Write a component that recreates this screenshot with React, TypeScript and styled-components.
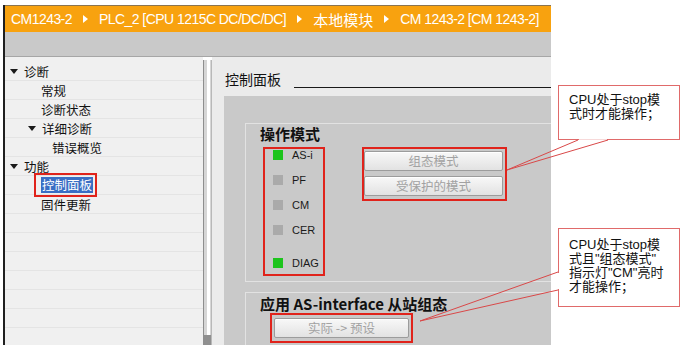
import React from "react";
import styled, { createGlobalStyle } from "styled-components";

const GlobalStyle = createGlobalStyle`
  html, body {
    margin: 0;
    padding: 0;
    background: #ffffff;
  }
  body {
    font-family: "Liberation Sans", "Noto Sans CJK SC", sans-serif;
  }
`;

const crumbs = [
  { text: "CM1243-2" },
  { text: "PLC_2 [CPU 1215C DC/DC/DC]" },
  { text: "本地模块", cjk: true },
  { text: "CM 1243-2 [CM 1243-2]" },
];

const treeRows = [
  { label: "诊断", pad: 5, arrow: true },
  { label: "常规", pad: 36 },
  { label: "诊断状态", pad: 36 },
  { label: "详细诊断", pad: 23, arrow: true },
  { label: "错误概览", pad: 47 },
  { label: "功能", pad: 5, arrow: true },
  { label: "控制面板", pad: 36, selected: true },
  { label: "固件更新", pad: 36 },
  { label: "" }, { label: "" }, { label: "" }, { label: "" },
  { label: "" }, { label: "" }, { label: "" }, { label: "" },
];

const leds = [
  { name: "AS-i", on: true },
  { name: "PF", on: false },
  { name: "CM", on: false },
  { name: "CER", on: false },
  { name: "DIAG", on: true, apart: true },
];

const App = () => {
  return (
    <Page>
      <GlobalStyle />
      <Window>
        <Breadcrumb>
          {crumbs.map((c, i) => (
            <React.Fragment key={c.text}>
              {i > 0 && <CrumbArrow />}
              <Crumb $cjk={!!c.cjk}>{c.text}</Crumb>
            </React.Fragment>
          ))}
        </Breadcrumb>
        <Toolbar />
        <Main>
          <Tree>
            {treeRows.map((r, i) => (
              <TreeRow key={i} $pad={r.pad || 0}>
                {r.arrow && <Toggle><DownArrow /></Toggle>}
                {r.selected ? <Selected>{r.label}</Selected> : r.label}
              </TreeRow>
            ))}
          </Tree>
          <Track>
            <Thumb />
          </Track>
          <Content>
            <Header>
              <HeaderTitle>控制面板</HeaderTitle>
              <HeaderRule />
            </Header>
            <Panel>
              <Group>
                <GroupTitle>操作模式</GroupTitle>
                <ModeBody>
                  <LedBox>
                    {leds.map((l) => (
                      <LedRow key={l.name} $apart={!!l.apart}>
                        <Led $on={l.on} />
                        {l.name}
                      </LedRow>
                    ))}
                  </LedBox>
                  <ButtonBox>
                    <PanelButton>组态模式</PanelButton>
                    <PanelButton>受保护的模式</PanelButton>
                  </ButtonBox>
                </ModeBody>
              </Group>
              <Group $second>
                <GroupTitle $tight>应用 AS-interface 从站组态</GroupTitle>
                <SlaveBox>
                  <PanelButton>实际 -&gt; 预设</PanelButton>
                </SlaveBox>
              </Group>
            </Panel>
          </Content>
        </Main>
      </Window>

      <Callout $top={85} $height={55} $padTop={7}>
        CPU处于stop模<br />式时才能操作；
      </Callout>
      <Callout $top={228} $height={79} $padTop={9}>
        CPU处于stop模<br />式且"组态模式"<br />指示灯"CM"亮时<br />才能操作；
      </Callout>

      <Tails width="685" height="345" viewBox="0 0 685 345">
        <line x1="579" y1="140" x2="607" y2="140" stroke="#ffffff" strokeWidth="1.5" />
        <polyline points="578,140 507,170 608,140" fill="none" stroke="#d94848" strokeWidth="1" />
        <line x1="558.5" y1="273" x2="558.5" y2="289" stroke="#ffffff" strokeWidth="1.5" />
        <polyline points="558,272 420,321 558,290" fill="none" stroke="#d94848" strokeWidth="1" />
      </Tails>
    </Page>
  );
};

export default App;

const Page = styled.div`
  position: relative;
  width: 685px;
  height: 345px;
  overflow: hidden;
  padding: 5px 0 0 3px;
  box-sizing: border-box;
`;

const Window = styled.div`
  width: 548px;
  height: 340px;
  box-sizing: border-box;
  border-left: 2px solid #1f1f1f;
  display: flex;
  flex-direction: column;
  overflow: hidden;
`;

const Breadcrumb = styled.div`
  height: 27px;
  box-sizing: border-box;
  border-top: 1px solid #8a7450;
  background: #f8a20f;
  display: flex;
  align-items: center;
  gap: 11px;
  padding-left: 6px;
  overflow: hidden;
  white-space: nowrap;
  color: #ffffff;
`;

const Crumb = styled.span<{ $cjk: boolean }>`
  font-size: ${(p) => (p.$cjk ? "15px" : "14px")};
  letter-spacing: ${(p) => (p.$cjk ? "0" : "-0.55px")};
`;

const CrumbArrow = styled.i`
  flex: none;
  width: 0;
  height: 0;
  border-top: 4px solid transparent;
  border-bottom: 4px solid transparent;
  border-left: 5px solid #ffffff;
`;

const Toolbar = styled.div`
  height: 25px;
  box-sizing: border-box;
  background: #c9c9c9;
  border-bottom: 1px solid #a6a6a6;
`;

const Main = styled.div`
  flex: 1;
  min-height: 0;
  display: flex;
`;

const Tree = styled.div`
  width: 198px;
  background: #f0f0f0;
  padding-top: 5px;
  overflow: hidden;
`;

const TreeRow = styled.div<{ $pad: number }>`
  height: 18px;
  border-bottom: 1px solid #e4e4e4;
  display: flex;
  align-items: center;
  padding-left: ${(p) => p.$pad}px;
  font-family: "Noto Sans CJK SC", sans-serif;
  font-size: 12.5px;
  color: #111111;
`;

const Toggle = styled.span`
  width: 14px;
  display: flex;
  align-items: center;
`;

const DownArrow = styled.i`
  width: 0;
  height: 0;
  border-left: 4px solid transparent;
  border-right: 4px solid transparent;
  border-top: 5px solid #1a1a1a;
`;

const Selected = styled.span`
  position: relative;
  background: #3a6ec4;
  color: #ffffff;
  padding: 0 1px;
  line-height: 16px;

  &::after {
    content: "";
    position: absolute;
    left: -7px;
    right: -4px;
    top: -4px;
    bottom: -4px;
    border: 2px solid #e0231b;
  }
`;

const Track = styled.div`
  width: 9px;
  box-sizing: border-box;
  margin-top: 3px;
  border-left: 1px solid #8e8e8e;
  border-right: 1px solid #b8b8b8;
  background: linear-gradient(to right, #d6d6d6 0 3px, #ffffff 3px 6px, #d6d6d6 6px);
  display: flex;
  flex-direction: column;
`;

const Thumb = styled.div`
  margin-top: auto;
  height: 10px;
  background: #8f8f8f;
`;

const Content = styled.div`
  flex: 1;
  min-width: 0;
  background: #ebebeb;
  padding: 14px 0 0 13px;
  display: flex;
  flex-direction: column;
`;

const Header = styled.div`
  height: 17px;
  display: flex;
  align-items: flex-end;
  gap: 13px;
`;

const HeaderTitle = styled.span`
  font-family: "Noto Sans CJK SC", sans-serif;
  font-size: 14px;
  line-height: 17px;
  color: #111111;
`;

const HeaderRule = styled.span`
  flex: 1;
  border-bottom: 1px solid #1a1a1a;
`;

const Panel = styled.div`
  flex: 1;
  margin: 8px 0 0 -1px;
  background: #c9c9c9;
  padding: 27px 0 0 21px;
  overflow: hidden;
`;

const Group = styled.div<{ $second?: boolean }>`
  margin-right: -20px;
  margin-top: ${(p) => (p.$second ? "10px" : "0")};
  border: 1px solid #e2e2e2;
  padding: 2px 0 5px 14px;
`;

const GroupTitle = styled.div<{ $tight?: boolean }>`
  font-family: "Noto Sans CJK SC", sans-serif;
  font-weight: 700;
  font-size: 15px;
  line-height: 16px;
  color: #111111;
  margin-top: ${(p) => (p.$tight ? "1px" : "0")};
`;

const ModeBody = styled.div`
  display: flex;
  align-items: flex-start;
  gap: 37px;
  margin-top: 5px;
  padding-left: 3px;
`;

const LedBox = styled.div`
  width: 62px;
  box-sizing: border-box;
  border: 2px solid #e0231b;
  padding: 0 0 5px 8px;
  display: flex;
  flex-direction: column;
  gap: 13px;
`;

const LedRow = styled.div<{ $apart: boolean }>`
  height: 12px;
  display: flex;
  align-items: center;
  gap: 9px;
  font-size: 11px;
  color: #1a1a1a;
  margin-top: ${(p) => (p.$apart ? "8px" : "0")};
`;

const Led = styled.span<{ $on: boolean }>`
  width: 10px;
  height: 10px;
  background: ${(p) => (p.$on ? "#1dc41d" : "#aaaaaa")};
`;

const ButtonBox = styled.div`
  width: 145px;
  box-sizing: border-box;
  border: 2px solid #e0231b;
  padding: 2px 2px 3px 0;
  display: flex;
  flex-direction: column;
  gap: 5px;
`;

const SlaveBox = styled.div`
  width: 143px;
  box-sizing: border-box;
  margin: 1px 0 0 10px;
  border: 2px solid #e0231b;
  padding: 3px 2px;
  display: flex;
`;

const PanelButton = styled.div`
  flex: 1;
  height: 20px;
  box-sizing: border-box;
  border: 1px solid #9c9c9c;
  border-radius: 2px;
  background: linear-gradient(#f8f8f8, #e2e2e2);
  box-shadow: inset 0 1px 0 #ffffff;
  color: #a2a2a2;
  font-family: "Noto Sans CJK SC", sans-serif;
  font-size: 12.5px;
  line-height: 18px;
  text-align: center;
`;

const Callout = styled.div<{ $top: number; $height: number; $padTop: number }>`
  position: absolute;
  left: 558px;
  top: ${(p) => p.$top}px;
  width: 122px;
  height: ${(p) => p.$height}px;
  box-sizing: border-box;
  border: 1px solid #e06a6a;
  background: #ffffff;
  padding: ${(p) => p.$padTop}px 0 0 10px;
  font-family: "Liberation Sans", "Noto Sans CJK SC", sans-serif;
  font-size: 13px;
  line-height: 14px;
  color: #111111;
  white-space: nowrap;
`;

const Tails = styled.svg`
  position: absolute;
  left: 0;
  top: 0;
  pointer-events: none;
`;
